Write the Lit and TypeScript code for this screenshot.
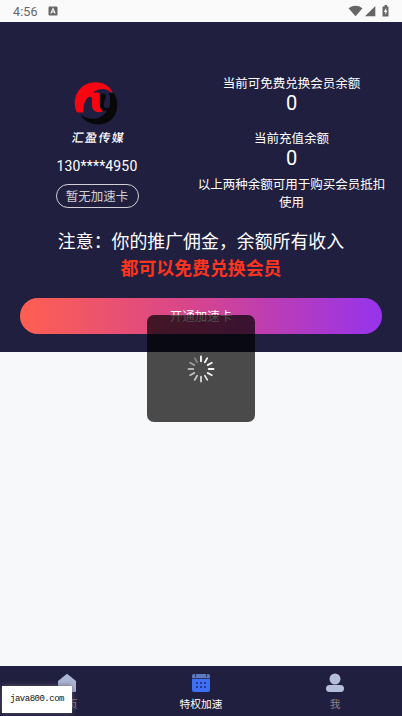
import { LitElement, html, css, svg } from "lit";
import { customElement } from "lit/decorators.js";

const spokes = [1, 1, 0.95, 0.95, 0.9, 0.85, 0.8, 0.72, 0.65, 0.58, 0.45, 0.32];

@customElement("app-root")
export class AppRoot extends LitElement {
  static styles = css`
    :host {
      display: flex;
      flex-direction: column;
      position: relative;
      width: 402px;
      height: 716px;
      overflow: hidden;
      background: #f7f8fa;
      color: #fff;
      font-family: Roboto, "Noto Sans CJK SC", sans-serif;
    }
    svg { display: block; }
    .status {
      height: 22px;
      flex: none;
      box-sizing: border-box;
      padding: 0 12px 0 13px;
      display: flex;
      align-items: center;
      background: #fafafa;
      color: #666;
      font-size: 12.5px;
    }
    .time { width: 35px; padding-top: 1px; letter-spacing: 0.1px; }
    .signals { margin-left: auto; }
    .hero {
      height: 330px;
      flex: none;
      box-sizing: border-box;
      padding-top: 53px;
      background: #211f40;
    }
    .account { display: flex; height: 152px; }
    .member {
      width: 194px;
      box-sizing: border-box;
      padding-top: 5px;
      display: flex;
      flex-direction: column;
      align-items: center;
    }
    .brand { height: 66px; }
    .phone { margin-top: 8px; height: 24px; line-height: 25px; font-size: 14px; letter-spacing: 0.15px; }
    .card {
      margin-top: 6px;
      width: 83px;
      height: 24px;
      box-sizing: border-box;
      border: 1px solid #d0d0d6;
      border-radius: 12px;
      text-align: center;
      line-height: 23px;
      font-size: 12.5px;
      color: #d0d0d4;
    }
    .balances { width: 195px; text-align: center; font-size: 12.5px; line-height: 18px; }
    .balance { height: 55px; }
    .amount { font-size: 20px; line-height: 21px; }
    .hint { margin-top: -9px; }
    .notice { padding-top: 2px; text-align: center; font-size: 17.9px; line-height: 26.500px; }
    .notice strong { display: block; color: #fc3420; font-weight: 700; }
    .open {
      margin: 16px 20px 0;
      height: 36px;
      border-radius: 18px;
      background: linear-gradient(90deg, #ff5f50, #d44490 50%, #9633ed);
      text-align: center;
      line-height: 37px;
      font-size: 12.5px;
    }
    .loading {
      position: absolute;
      left: 147px;
      top: 315px;
      width: 108px;
      height: 107px;
      border-radius: 7px;
      background: rgba(0, 0, 0, 0.7);
      display: flex;
      align-items: center;
      justify-content: center;
    }
    .tabs {
      margin-top: auto;
      height: 50px;
      display: grid;
      grid-template-columns: repeat(3, 1fr);
      background: #211f40;
    }
    .tab {
      display: flex;
      flex-direction: column;
      align-items: center;
      padding-top: 7px;
      font-size: 10.7px;
      line-height: 16px;
      color: #8d8285;
    }
    .tab svg { margin-bottom: 4px; }
    .active { color: #fff; }
    .mark {
      position: absolute;
      left: 2px;
      bottom: 3px;
      width: 70px;
      height: 27px;
      background: #fff;
      color: #111;
      box-shadow: 0 0 5px #605a6b;
      text-align: center;
      font: 9px/27px "Liberation Mono", monospace;
      letter-spacing: -0.5px;
    }
  `;

  render() {
    return html`
      <div class="status">
        <span class="time">4:56</span>
        <svg width="10" height="10" viewBox="0 0 10 10">
          <rect x="0.5" y="0.5" width="9" height="9" rx="1.2" fill="#666" />
          <path d="M2.8 7.5 5 2.5 7.2 7.5M3.6 6h2.8" fill="none" stroke="#fafafa" stroke-width="1.1" />
        </svg>
        <svg class="signals" width="42" height="14" viewBox="0 0 42 14" fill="#666">
          <path d="M.5 4.2Q7.5-.7 14.500 4.200L7.500 12.300Z" />
          <path d="M27.300 2v10.300H17Z" />
          <path d="M35 2.400h1.500V1h2.500v1.400h1.500v10H34.500v-10Z" />
          <path d="M38.300 3.500 35.800 8h1.500v3L39.500 6.500H38Z" fill="#fafafa" />
        </svg>
      </div>
      <section class="hero">
        <div class="account">
          <div class="member">
            <svg class="brand" width="56" height="66" viewBox="0 0 56 66">
              <path d="M8 32.500C1.500 19 10 2.300 26.500 2.300c8.500 0 15 4.200 17.500 11.700C38 7.500 30 7.500 24 12.500h5c1 0 1.800.8 1.800 2v9.500c0 4 1.700 6 4.700 6.500-5.500 3.500-12.500 1.500-12.500-5v-6.500c0-3-3-3-5-.5-3 3.500-4 8-3.500 14Z" fill="#f70510" />
              <path d="M31.500 13.500h2.500c2 0 2.800 1.500 2.500 4l-2 7c0 4 4.500 5 6.500 1.500v-9c0-1.500-.5-2.500-1.500-4h5.500c8 14 1 31.500-15.500 31.500-8.500 0-14.500-3.500-18-10 9 7 22 5.500 27-5-4 3-7.500 1-7.500-4Z" fill="#08080b" />
              <text x="3" y="62.500" font-size="12" font-weight="500" fill="#fff" textLength="52" transform="skewX(-8) translate(8 0)" font-family="Noto Sans CJK SC">汇盈传媒</text>
            </svg>
            <div class="phone">130****4950</div>
            <div class="card">暂无加速卡</div>
          </div>
          <div class="balances">
            <div class="balance">当前可免费兑换会员余额<div class="amount">0</div></div>
            <div class="balance">当前充值余额<div class="amount">0</div></div>
            <div class="hint">以上两种余额可用于购买会员抵扣使用</div>
          </div>
        </div>
        <div class="notice">注意：你的推广佣金，余额所有收入<strong>都可以免费兑换会员</strong></div>
        <div class="open">开通加速卡</div>
      </section>
      <nav class="tabs">
        <div class="tab">
          <svg width="20" height="20" viewBox="0 0 20 20"><path d="M1 8 10 .8 19 8v9.500q0 1.500-1.500 1.500h-15Q1 19 1 17.500Z" fill="#abb6d4" /></svg>
          首页
        </div>
        <div class="tab active">
          <svg width="20" height="20" viewBox="0 0 20 20">
            <rect x="1" y="2" width="18" height="17" rx="2" fill="#3f6ff3" />
            <path d="M1 5.500V3q0-2 2-2h14q2 0 2 2v2.500Z" fill="#5f78c0" />
            <path d="M4.500 1v3M15.500 1v3M1 5.500h18" stroke="#29346d" />
            <path d="M5 10h2m2 0h2m2 0h2M5 14h2m2 0h2m2 0h2" stroke="#243b96" stroke-width="2" />
          </svg>
          特权加速
        </div>
        <div class="tab">
          <svg width="20" height="20" viewBox="0 0 20 20" fill="#b5bfdb"><circle cx="10" cy="6" r="5.500" /><rect x="1" y="12" width="18" height="7" rx="3.500" /></svg>
          我
        </div>
      </nav>
      <div class="loading">
        <svg width="28" height="28" viewBox="-14 -14 28 28">
          ${spokes.map((o, i) => svg`<path d="M0-12.500V-7.700" stroke="#fff" stroke-width="1.800" stroke-linecap="round" opacity=${o} transform="rotate(${i * 30})" />`)}
        </svg>
      </div>
      <div class="mark">java800.com</div>
    `;
  }
}
